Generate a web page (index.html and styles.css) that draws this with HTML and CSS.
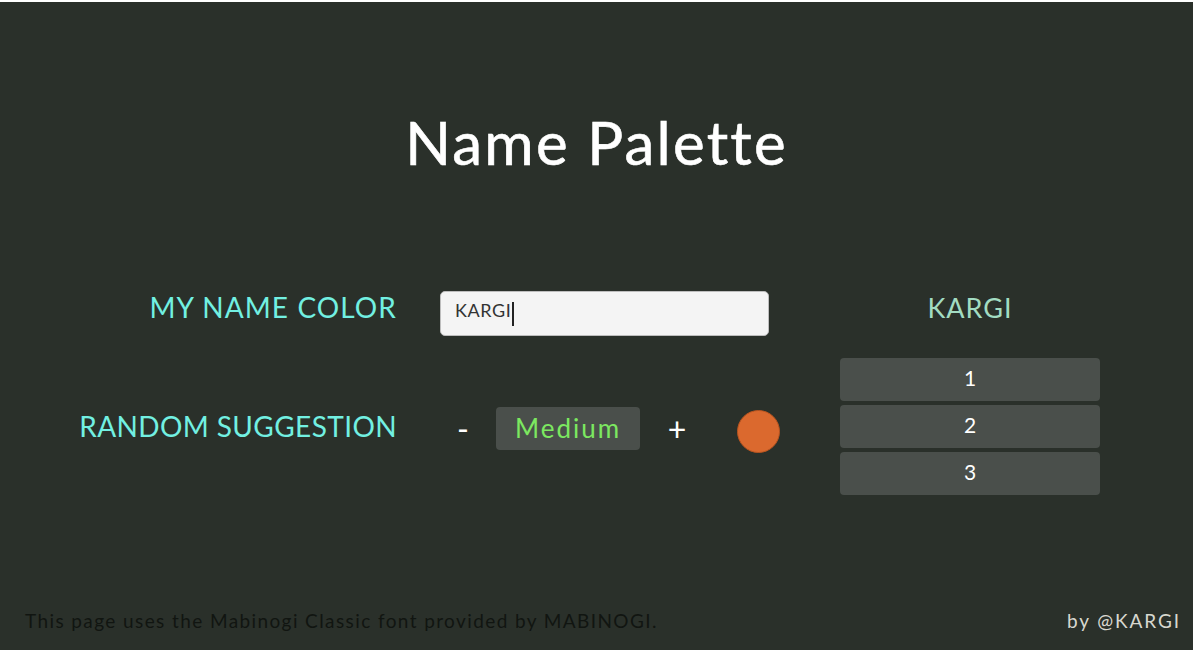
FILE: index.html
```html
<!DOCTYPE html>
<html lang="en">
<head>
<meta charset="utf-8">
<title>Name Palette</title>
<link rel="stylesheet" href="styles.css">
</head>
<body>
<div class="page">
  <h1 class="title">Name Palette</h1>
  <div class="panel">
    <div class="label raised">MY NAME COLOR</div>
    <div class="name-input"><span class="typed">KARGI</span><span class="caret"></span></div>
    <div class="preview raised">KARGI</div>

    <div class="label">RANDOM SUGGESTION</div>
    <div class="controls">
      <button class="step">-</button>
      <div class="level">Medium</div>
      <button class="step">+</button>
      <span class="swatch"></span>
    </div>
    <div class="choices">
      <button class="choice">1</button>
      <button class="choice">2</button>
      <button class="choice">3</button>
    </div>
  </div>
  <footer class="footer">
    <span class="credit">This page uses the Mabinogi Classic font provided by MABINOGI.</span>
    <span class="author">by @KARGI</span>
  </footer>
</div>
</body>
</html>
```

FILE: styles.css
```css
* { box-sizing: border-box; }
html, body { margin: 0; padding: 0; }
body {
  background: #2a302a;
  font-family: "Lato", "Noto Sans", sans-serif;
}
.page {
  height: 650px;
  border-top: 2px solid #ffffff;
  display: flex;
  flex-direction: column;
}
.title {
  margin: 104px 0 0 0;
  text-align: center;
  color: #ffffff;
  font-size: 60px;
  font-weight: 400;
  line-height: 72px;
  letter-spacing: 2.2px;
  -webkit-text-stroke: 0.6px #ffffff;
}
.panel {
  margin-top: 112px;
  display: grid;
  grid-template-columns: 397px 357px 260px;
  column-gap: 43px;
  row-gap: 22px;
  align-items: center;
}
.label {
  text-align: right;
  color: #72f0e2;
  font-size: 28px;
  letter-spacing: 0.4px;
  padding-bottom: 2px;
}
.label.raised { letter-spacing: 1.1px; }
.raised { padding-bottom: 12px; }
.name-input {
  width: 329px;
  height: 45px;
  background: #f4f4f4;
  border: 1px solid #bdbdbd;
  border-radius: 5px;
  display: flex;
  align-items: center;
  padding-left: 14px;
  padding-bottom: 6px;
  color: #333333;
  font-size: 18px;
  letter-spacing: 0.6px;
}
.caret {
  display: inline-block;
  width: 2px;
  height: 24px;
  background: #222;
  margin-left: 1px;
  margin-top: 8px;
}
.preview {
  text-align: center;
  color: #a2dcc2;
  font-size: 27px;
  letter-spacing: 1px;
}
.controls {
  display: flex;
  align-items: center;
  padding-top: 3px;
}
.step {
  background: none;
  border: none;
  color: #ffffff;
  font-family: inherit;
  font-size: 32px;
  padding: 0;
  width: 46px;
  text-align: center;
}
.step:first-child { margin-right: 10px; }
.level {
  width: 144px;
  height: 43px;
  background: #4a4f4b;
  border-radius: 4px;
  color: #7ce860;
  font-size: 26px;
  display: flex;
  align-items: center;
  justify-content: center;
  letter-spacing: 2px;
  margin-right: 14px;
}
.swatch {
  width: 43px;
  height: 43px;
  border-radius: 50%;
  background: #db692e;
  border: 1px solid #b8541f;
  margin-left: 37px;
  margin-top: 7px;
}
.choices {
  display: flex;
  flex-direction: column;
  gap: 4px;
}
.choice {
  height: 43px;
  background: #4a4f4b;
  border: none;
  border-radius: 4px;
  color: #ffffff;
  font-family: inherit;
  font-size: 21px;
  padding-bottom: 6px;
}
.footer {
  margin-top: auto;
  display: flex;
  justify-content: space-between;
  align-items: center;
  padding: 0 12px 18px 25px;
}
.credit {
  color: #111511;
  font-size: 19px;
  letter-spacing: 1.4px;
}
.author {
  color: #d8d8d0;
  font-size: 19px;
  letter-spacing: 1.9px;
}
```
